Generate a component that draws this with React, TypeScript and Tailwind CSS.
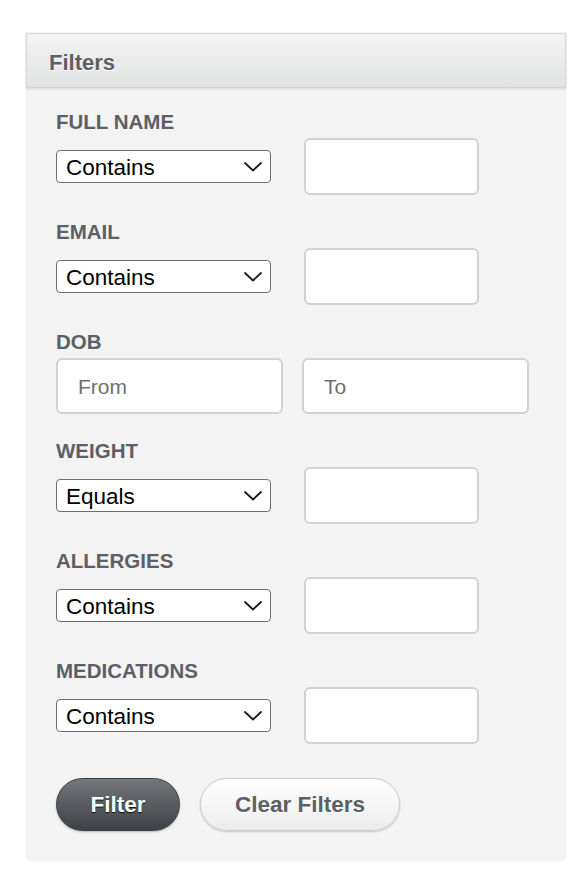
import React from "react";

const font = { fontFamily: '"Liberation Sans", Arial, Helvetica, sans-serif' };

function Chevron() {
  return (
    <svg width="18" height="10" viewBox="0 0 18 10" className="shrink-0">
      <path d="M1 1 L9 8.5 L17 1" fill="none" stroke="#1a1a1a" strokeWidth="1.8" strokeLinecap="round" strokeLinejoin="round" />
    </svg>
  );
}

function SelectBox({ value }: { value: string }) {
  return (
    <div className="w-[215px] h-[33px] flex items-center justify-between pl-[9px] pr-[8px] bg-white border-[1.5px] border-[#6f6f6f] rounded-[4px] text-[22.5px] text-black leading-none">
      <span className="pt-[3px]">{value}</span>
      <Chevron />
    </div>
  );
}

function TextBox({ w, h, placeholder }: { w: string; h: string; placeholder?: string }) {
  return (
    <div className={`${w} ${h} bg-white border-2 border-[#cfd3d8] rounded-[6px] flex items-center pl-[20px] pt-[2px] text-[21px] text-[#6f6f6f]`}>
      {placeholder}
    </div>
  );
}

function Section({ label, op }: { label: string; op: string }) {
  return (
    <div className="flex flex-col">
      <div className="h-[24px] leading-[24px] text-[20.5px] font-bold text-[#5c6066]">{label}</div>
      <div className="mt-[4px] flex items-center gap-[33px]">
        <SelectBox value={op} />
        <TextBox w="w-[175px]" h="h-[57px]" />
      </div>
    </div>
  );
}

export default function App() {
  return (
    <div className="min-h-[878px] bg-white pt-[33px] pl-[26px]" style={font}>
      <div className="w-[540px] bg-[#f3f3f3] rounded-b-[7px] shadow-[0_0_2px_rgba(0,0,0,0.12)]">
        <div className="h-[55px] flex items-center pl-[22px] pt-[3px] bg-gradient-to-b from-[#f3f3f3] to-[#e2e3e3] border border-[#d5d6d6] shadow-[0_1px_2px_rgba(0,0,0,0.12)]">
          <span className="text-[22px] font-bold text-[#5c6066] [text-shadow:0_1px_0_#fff]">Filters</span>
        </div>
        <div className="px-[30px] pt-[22px] pb-[30px] flex flex-col gap-[25px]">
          <Section label="FULL NAME" op="Contains" />
          <Section label="EMAIL" op="Contains" />
          <div className="flex flex-col">
            <div className="h-[24px] leading-[24px] text-[20.5px] font-bold text-[#5c6066]">DOB</div>
            <div className="mt-[4px] flex items-center gap-[19px]">
              <TextBox w="w-[227px]" h="h-[56px]" placeholder="From" />
              <TextBox w="w-[227px]" h="h-[56px]" placeholder="To" />
            </div>
          </div>
          <Section label="WEIGHT" op="Equals" />
          <Section label="ALLERGIES" op="Contains" />
          <Section label="MEDICATIONS" op="Contains" />
          <div className="mt-[9px] flex items-center gap-[20px]">
            <div className="w-[124px] h-[53px] rounded-full border border-[#3a3d40] bg-gradient-to-b from-[#74777b] to-[#3e4145] flex items-center justify-center text-[22.5px] font-bold text-white [text-shadow:0_1px_1px_#111] shadow-[0_1px_2px_rgba(0,0,0,0.25)]">
              Filter
            </div>
            <div className="w-[200px] h-[53px] rounded-full border border-[#cbcbcb] bg-gradient-to-b from-[#ffffff] to-[#ececec] flex items-center justify-center text-[22.5px] font-bold text-[#5c6066] [text-shadow:0_1px_0_#fff] shadow-[0_1px_2px_rgba(0,0,0,0.18)]">
              Clear Filters
            </div>
          </div>
        </div>
      </div>
    </div>
  );
}
